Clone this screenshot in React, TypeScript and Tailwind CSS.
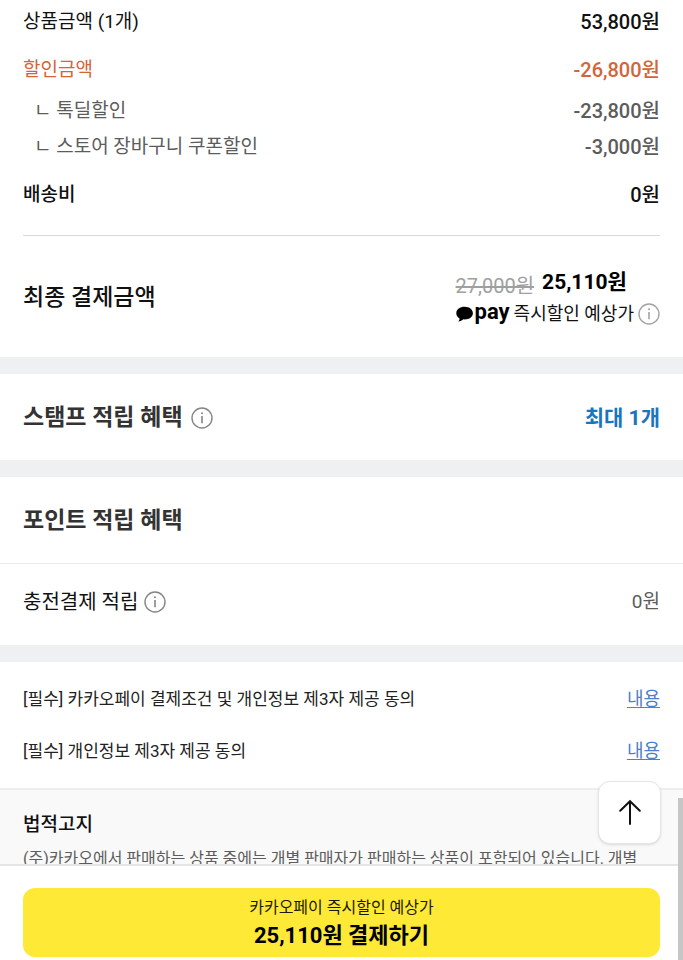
// react imports
import { type ReactNode } from "react";

// clsx imports
import clsx from "clsx";

// types
type PriceRowProps = {
  label: string;
  price: string;
  className?: string;
};

type AgreementRowProps = {
  label: string;
  href: string;
};

type SectionProps = {
  children: ReactNode;
  className?: string;
};

function InfoButton({ label, className }: { label: string; className?: string }) {
  return (
    <button type="button" aria-label={label} className={clsx("shrink-0", className ?? "text-[#858585]")}>
      <svg viewBox="0 0 22 22" className="size-[22px]" fill="none" stroke="currentColor">
        <circle cx="11" cy="11" r="10" strokeWidth="1.4" />
        <path d="M11 9V16.2" strokeWidth="1.6" />
        <circle cx="11" cy="6.2" r="1" fill="currentColor" stroke="none" />
      </svg>
    </button>
  );
}

function PriceRow({ label, price, className }: PriceRowProps) {
  return (
    <div className={clsx("flex justify-between leading-7", className)}>
      <dt className="text-[19px]">{label}</dt>
      <dd className="text-[20px] font-medium">{price}</dd>
    </div>
  );
}

function AgreementRow({ label, href }: AgreementRowProps) {
  return (
    <li className="flex justify-between leading-7">
      <span className="text-[17px] text-[#222222]">{label}</span>
      <a href={href} aria-label={`${label} 내용`} className="text-[18px] text-[#4a80cc] underline underline-offset-2">
        내용
      </a>
    </li>
  );
}

function Section({ children, className }: SectionProps) {
  return <section className={clsx("border-b-[17px] border-[#eef0f2] px-[23px]", className)}>{children}</section>;
}

function PayLogo() {
  return (
    <span className="flex items-center gap-[2px] pb-1 text-black">
      <svg viewBox="0 0 17 16" className="mt-1 h-4 w-[17px]" fill="currentColor" aria-hidden="true">
        <path d="M8.7.8C4 .8.3 3.500.3 7.200c0 2.300 1.300 4.200 3.300 5.300-.1 1.200-.6 2.200-1.300 3.100 2-.2 3.900-1.200 5.100-2.300.4.1.9.1 1.300.1 4.700 0 8.200-2.600 8.200-6.200S13.400.8 8.700.8Z" />
      </svg>
      <span className="text-[22px] leading-6 font-bold">pay</span>
    </span>
  );
}

export default function App() {
  return (
    <div className="relative flex h-screen flex-col overflow-hidden bg-white font-[Roboto,'Noto_Sans_CJK_KR',sans-serif] text-[#111111]">
      <main className="min-h-0 flex-1 overflow-hidden">
        <Section className="pt-2">
          <dl className="border-b border-[#d9d9d9] pb-[26px]">
            <PriceRow label="상품금액 (1개)" price="53,800원" />
            <PriceRow label="할인금액" price="-26,800원" className="mt-5 text-[#d2653a]" />
            <PriceRow label="ㄴ 톡딜할인" price="-23,800원" className="mt-[13px] pl-[11px] text-[#5c5c5c]" />
            <PriceRow label="ㄴ 스토어 장바구니 쿠폰할인" price="-3,000원" className="mt-2 pl-[11px] text-[#5c5c5c]" />
            <PriceRow label="배송비" price="0원" className="mt-5 font-medium" />
          </dl>
          <div className="flex items-center justify-between pt-[30px] pb-[27px]">
            <h2 className="text-[23px] leading-8 font-medium">최종 결제금액</h2>
            <div>
              <p className="flex items-end gap-2">
                <del className="text-[20px] leading-6 text-[#a0a0a0]">27,000원</del>
                <strong className="text-[21px] leading-8 font-bold text-black">25,110원</strong>
              </p>
              <p className="flex items-center gap-1 leading-8">
                <PayLogo />
                <span className="text-[18px]">즉시할인 예상가</span>
                <InfoButton label="즉시할인 예상가 안내" className="text-[#a3a3a3]" />
              </p>
            </div>
          </div>
        </Section>

        <Section className="flex items-center justify-between pt-7 pb-[26px]">
          <div className="flex items-center gap-2">
            <h2 className="text-[23px] leading-8 font-bold text-[#333333]">스탬프 적립 혜택</h2>
            <InfoButton label="스탬프 적립 안내" />
          </div>
          <strong className="text-[21px] leading-8 font-bold text-[#1a75bd]">최대 1개</strong>
        </Section>

        <Section className="pt-7 pb-[27px]">
          <h2 className="text-[23px] leading-8 font-bold text-[#333333]">포인트 적립 혜택</h2>
          <div className="-mx-[23px] mt-[26px] flex items-center justify-between border-t border-[#ebebeb] px-[23px] pt-[22px]">
            <div className="flex items-center gap-[6px]">
              <h3 className="text-[20px] leading-8">충전결제 적립</h3>
              <InfoButton label="충전결제 적립 안내" />
            </div>
            <span className="text-[19px] leading-8 text-[#5c5c5c]">0원</span>
          </div>
        </Section>

        <ul className="flex flex-col gap-6 px-[23px] pt-[23px] pb-[23px]">
          <AgreementRow label="[필수] 카카오페이 결제조건 및 개인정보 제3자 제공 동의" href="#pay-terms" />
          <AgreementRow label="[필수] 개인정보 제3자 제공 동의" href="#privacy-terms" />
        </ul>

        <section className="border-t-2 border-[#ededed] bg-[#f9f9f9] pt-[21px] pl-[23px]">
          <h2 className="text-[19px] leading-7 font-medium">법적고지</h2>
          <p className="mt-[6px] text-[16px] leading-7 whitespace-nowrap text-[#5c5c5c]">
            (주)카카오에서 판매하는 상품 중에는 개별 판매자가 판매하는 상품이 포함되어 있습니다. 개별
          </p>
        </section>
      </main>

      <footer className="relative border-t-2 border-[#e3e5e6] bg-white px-[23px] pt-[22px] pb-[3px]">
        <button
          type="button"
          aria-label="맨 위로"
          className="absolute right-[22px] bottom-full mb-[22px] flex size-[63px] items-center justify-center rounded-xl border border-[#e6e6e6] bg-white shadow-sm"
        >
          <svg viewBox="0 0 24 28" className="h-7 w-6" fill="none" stroke="#111111" strokeWidth="2" strokeLinecap="round">
            <path d="M12 25V2.2M2.2 11.8 12 2.2l9.8 9.6" />
          </svg>
        </button>
        <button
          type="button"
          className="flex w-full flex-col items-center rounded-xl bg-[#fee937] pt-2 pb-[5px] text-[#1a1a00]"
        >
          <span className="text-[16px] leading-6">카카오페이 즉시할인 예상가</span>
          <span className="text-[22px] leading-8 font-bold text-black">25,110원 결제하기</span>
        </button>
      </footer>

      {/* scroll position thumb */}
      <div className="absolute right-0 bottom-0 h-[162px] w-[5px] bg-[#c6c6c6]" />
    </div>
  );
}
